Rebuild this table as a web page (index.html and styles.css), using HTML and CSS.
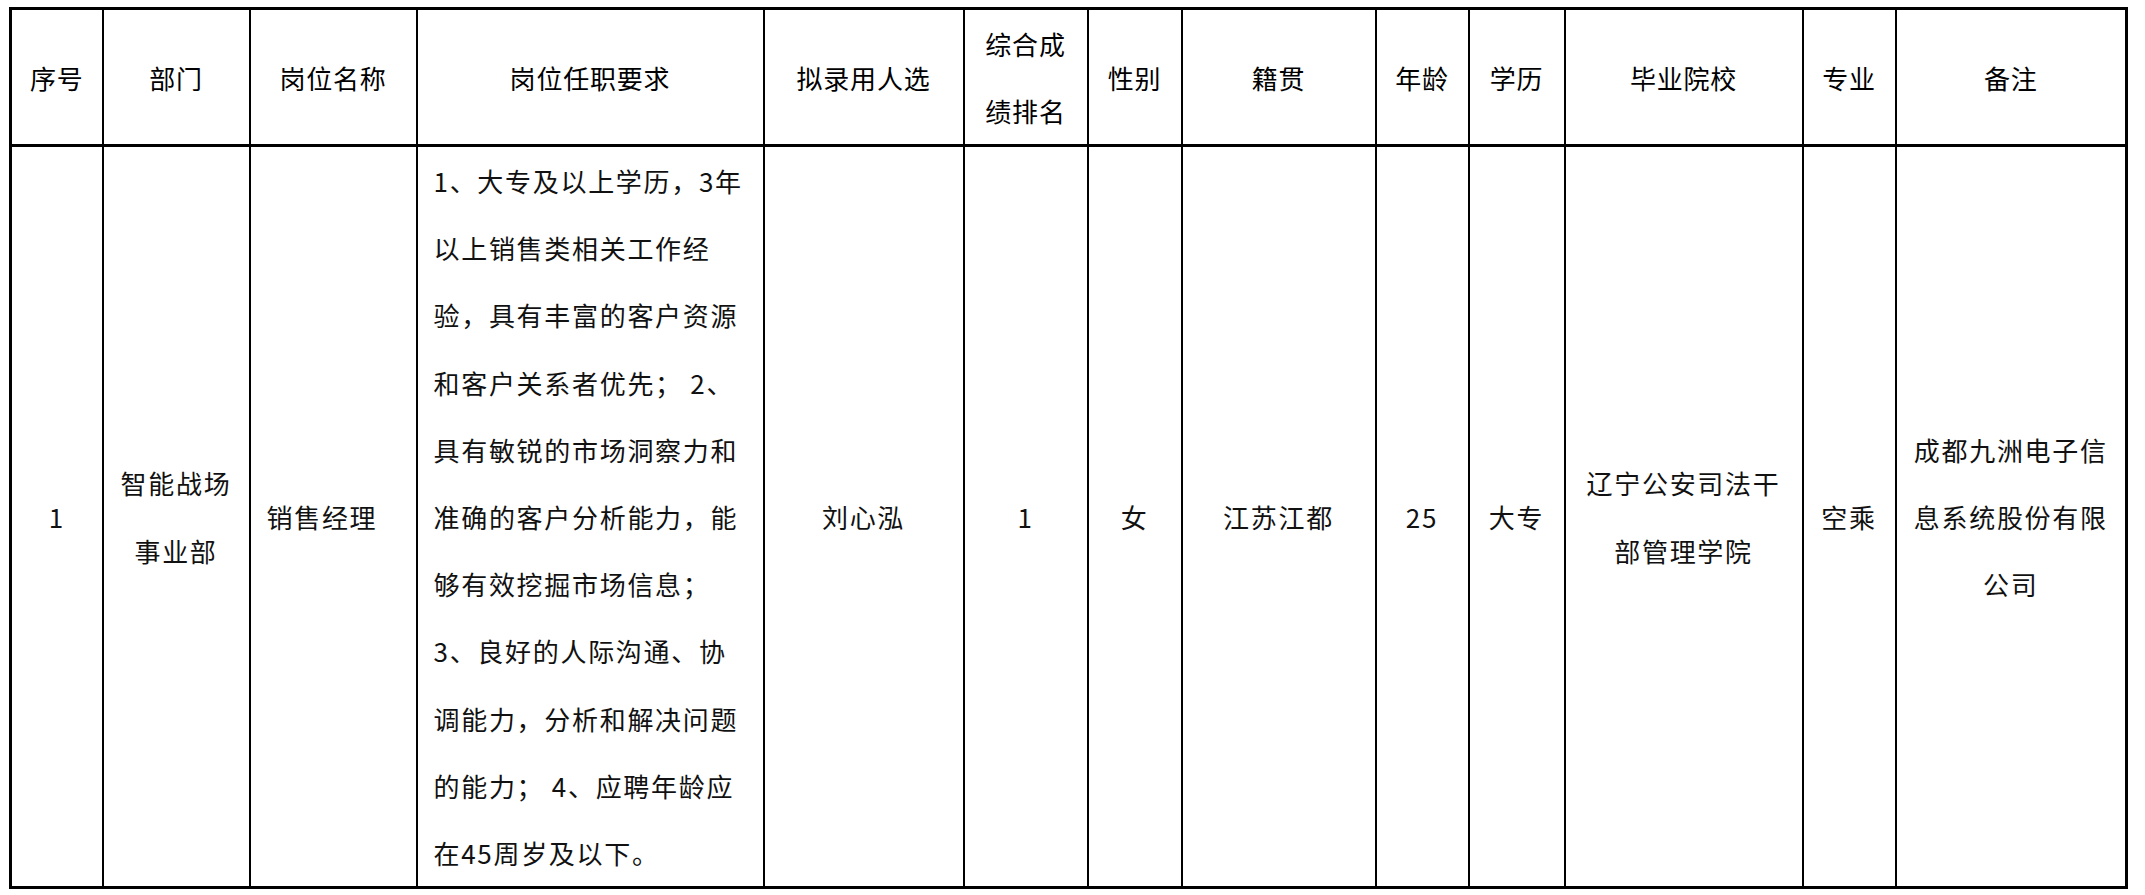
FILE: index.html
```html
<!DOCTYPE html>
<html lang="zh-CN">
<head>
<meta charset="utf-8">
<title>拟录用人选公示</title>
<link rel="stylesheet" href="styles.css">
</head>
<body>
<div class="page">
<table class="sheet">
<colgroup>
<col class="w-no"><col class="w-dept"><col class="w-post"><col class="w-req"><col class="w-name"><col class="w-rank"><col class="w-sex"><col class="w-home"><col class="w-age"><col class="w-edu"><col class="w-school"><col class="w-major"><col class="w-note">
</colgroup>
<thead>
<tr class="head">
<th>序号</th>
<th>部门</th>
<th>岗位名称</th>
<th>岗位任职要求</th>
<th>拟录用人选</th>
<th>综合成<br>绩排名</th>
<th>性别</th>
<th>籍贯</th>
<th>年龄</th>
<th>学历</th>
<th>毕业院校</th>
<th>专业</th>
<th>备注</th>
</tr>
</thead>
<tbody>
<tr class="row">
<td>1</td>
<td>智能战场<br>事业部</td>
<td class="left">销售经理</td>
<td class="left req">1、大专及以上学历，3年<br>以上销售类相关工作经<br>验，具有丰富的客户资源<br>和客户关系者优先； 2、<br>具有敏锐的市场洞察力和<br>准确的客户分析能力，能<br>够有效挖掘市场信息；<br>3、良好的人际沟通、协<br>调能力，分析和解决问题<br>的能力； 4、应聘年龄应<br>在45周岁及以下。</td>
<td>刘心泓</td>
<td>1</td>
<td>女</td>
<td>江苏江都</td>
<td>25</td>
<td>大专</td>
<td>辽宁公安司法干<br>部管理学院</td>
<td>空乘</td>
<td>成都九洲电子信<br>息系统股份有限<br>公司</td>
</tr>
</tbody>
</table>
</div>
</body>
</html>
```

FILE: styles.css
```css
html, body {
  margin: 0;
  padding: 0;
  background: #ffffff;
}

.page {
  padding: 7px 0 0 9px;
}

.sheet {
  border-collapse: collapse;
  table-layout: fixed;
  width: 2119px;
  border: 3px solid #000;
}

.w-no { width: 92px; }
.w-dept { width: 147px; }
.w-post { width: 167px; }
.w-req { width: 347px; }
.w-name { width: 200px; }
.w-rank { width: 124px; }
.w-sex { width: 94px; }
.w-home { width: 194px; }
.w-age { width: 93px; }
.w-edu { width: 96px; }
.w-school { width: 238px; }
.w-major { width: 93px; }
.w-note { width: 231px; }

.sheet th,
.sheet td {
  border: 2px solid #000;
  padding: 0 4px;
  text-align: center;
  vertical-align: middle;
  font-family: "Noto Sans CJK SC", "Noto Sans", sans-serif;
  font-size: 26px;
  color: #000;
  white-space: nowrap;
}

.head th {
  height: 134px;
  line-height: 67px;
  font-weight: 400;
  letter-spacing: 0.8px;
  border-bottom-width: 3px;
}

.row td {
  height: 739px;
  line-height: 67.2px;
  letter-spacing: 1.7px;
  color: #111;
}

.row td.left {
  text-align: left;
  padding-left: 16px;
}
```
